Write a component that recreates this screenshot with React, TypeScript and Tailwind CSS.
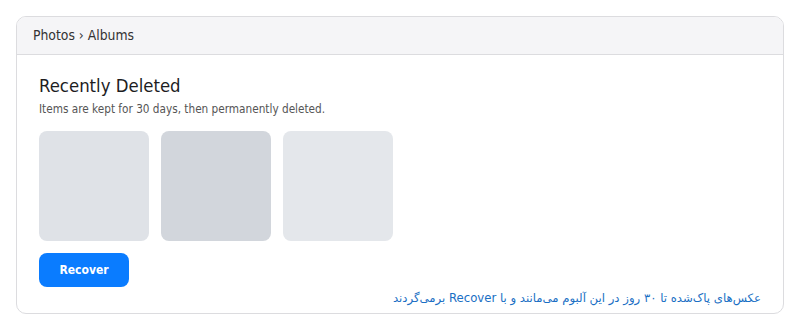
export default function App() {
  const tiles = ["bg-[#dfe2e7]", "bg-[#d2d6dc]", "bg-[#e4e7eb]"];

  return (
    <div className="w-full min-h-screen bg-white p-4 font-['DejaVu_Sans_Condensed','DejaVu_Sans',sans-serif]">
      <div className="border border-[#dcdcdf] rounded-[10px] overflow-hidden">
        {/* Header */}
        <div className="h-[38px] bg-[#f5f5f7] border-b border-[#dcdcdf] flex items-center px-4">
          <span className="text-[13.8px] text-[#333]">Photos › Albums</span>
        </div>

        {/* Body */}
        <div className="px-[22px] pt-[19px] pb-[7px]">
          <h1 className="text-[18.4px] leading-[24px] text-[#1d1d1f]">Recently Deleted</h1>
          <p className="text-[11.7px] leading-[16px] text-[#555] mt-[3px]">
            Items are kept for 30 days, then permanently deleted.
          </p>

          <div className="flex gap-3 mt-[14px]">
            {tiles.map((c, i) => (
              <div key={i} className={`w-[110px] h-[110px] rounded-[8px] ${c}`} />
            ))}
          </div>

          <button className="mt-3 w-[90px] h-[34px] rounded-[8px] bg-[#0a7cff] text-white text-[12px] font-bold">
            Recover
          </button>

          <p dir="rtl" className="font-['DejaVu_Sans',sans-serif] text-[11.7px] leading-[16px] text-[#1a6fc4] mt-[3px]">
            عکس‌های پاک‌شده تا ۳۰ روز در این آلبوم می‌مانند و با Recover برمی‌گردند
          </p>
        </div>
      </div>
    </div>
  );
}
